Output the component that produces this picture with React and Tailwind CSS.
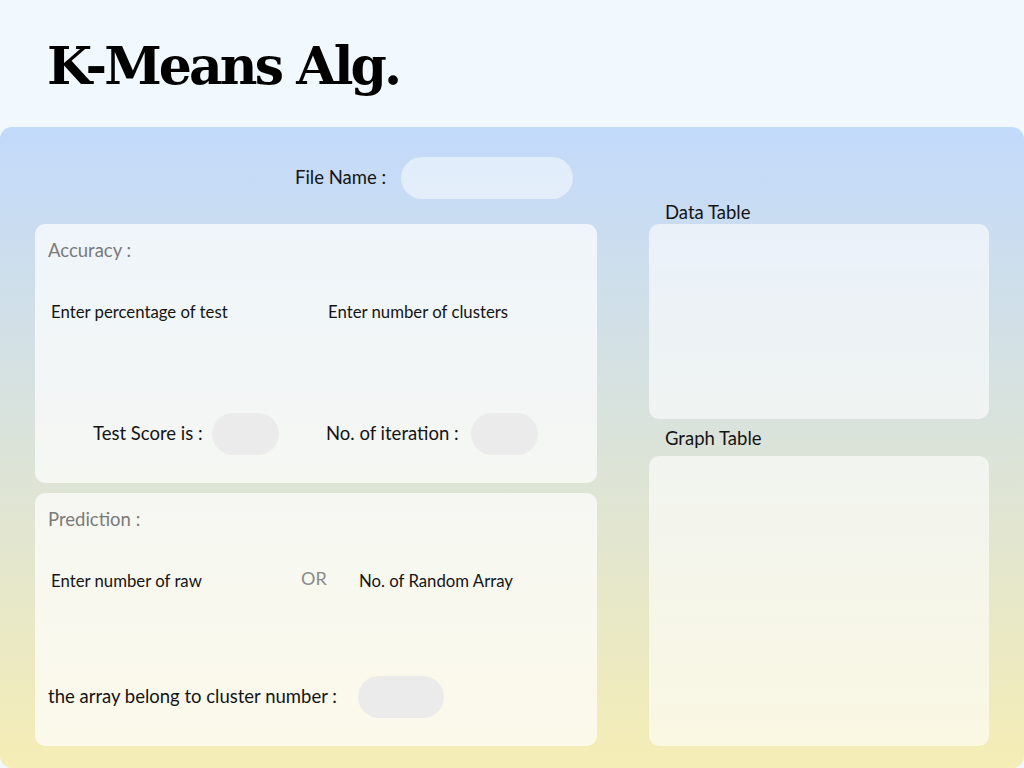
import React from "react";

const Pill = ({ className }) => (
  <div className={`h-[42px] rounded-full bg-[#ebebeb] ${className}`}></div>
);

const App = () => {
  return (
    <div className="w-[1024px] h-[768px] bg-[#f1f9fe] flex flex-col overflow-hidden font-['Lato',sans-serif] text-[#141414]">
      <header className="h-[127px] pl-[47px] pt-[30px]">
        <h1 className="font-['DejaVu_Serif',serif] font-bold text-[52px] leading-[72px] tracking-[-2.9px] text-black">
          K-Means Alg.
        </h1>
      </header>

      <main className="flex-1 rounded-xl bg-linear-to-b from-[#c2dafb] via-[#dbe3d9] to-[#f5edb5] grid grid-cols-[562px_340px] gap-[52px] pl-[35px]">
        {/* left column */}
        <div className="flex flex-col pt-[30px]">
          <div className="flex items-center h-[42px] pl-[260px]">
            <span className="w-[106px] text-[18.5px]">File Name :</span>
            <div className="w-[172px] h-[42px] rounded-full bg-white/50"></div>
          </div>

          <section className="mt-[25px] h-[259px] rounded-[10px] bg-white/70 flex flex-col pl-[13px] pt-[15px] pb-[28px]">
            <h2 className="text-[18.5px] leading-[22px] text-[#7a7a7a]">Accuracy :</h2>
            <div className="grid grid-cols-[277px_1fr] pl-[3px] mt-[38px] text-[16.75px]">
              <span>Enter percentage of test</span>
              <span>Enter number of clusters</span>
            </div>
            <div className="mt-auto flex items-center text-[18.5px]">
              <span className="ml-[45px] w-[119px]">Test Score is :</span>
              <Pill className="w-[67px]" />
              <span className="ml-[47px] w-[145px]">No. of iteration :</span>
              <Pill className="w-[67px]" />
            </div>
          </section>

          <section className="mt-[10px] h-[253px] rounded-[10px] bg-white/70 flex flex-col pl-[13px] pt-[15px] pb-[28px]">
            <h2 className="text-[18.5px] leading-[22px] text-[#7a7a7a]">Prediction :</h2>
            <div className="flex items-center pl-[3px] mt-[38px] text-[16.75px]">
              <span className="w-[250px]">Enter number of raw</span>
              <span className="w-[58px] text-[18px] text-[#8a8a8a] -mt-[5px]">OR</span>
              <span>No. of Random Array</span>
            </div>
            <div className="mt-auto flex items-center text-[18.5px]">
              <span className="w-[310px]">the array belong to cluster number :</span>
              <Pill className="w-[86px]" />
            </div>
          </section>
        </div>

        {/* right column */}
        <div className="flex flex-col pt-[73px] pb-[22px]">
          <h3 className="pl-[16px] text-[18.5px] leading-[24px]">Data Table</h3>
          <div className="h-[195px] rounded-[10px] bg-white/60"></div>
          <h3 className="pl-[16px] mt-[7px] text-[18.5px] leading-[24px]">Graph Table</h3>
          <div className="mt-[6px] flex-1 rounded-[10px] bg-white/60"></div>
        </div>
      </main>
    </div>
  );
};

export default App;
